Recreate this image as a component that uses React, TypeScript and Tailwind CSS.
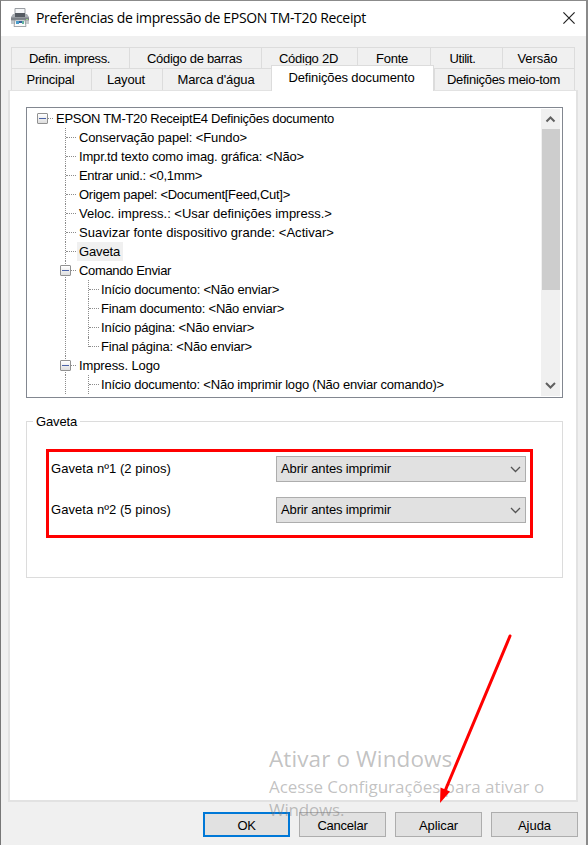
import type { ReactNode } from 'react';

type Tab = { label: string; cls: string; active?: boolean };

const topTabs: Tab[] = [
  { label: 'Defin. impress.', cls: 'w-[118px] tracking-[-0.38px]' },
  { label: 'Código de barras', cls: 'w-[132px] tracking-[-0.3px]' },
  { label: 'Código 2D', cls: 'w-[96px] tracking-[-0.27px]' },
  { label: 'Fonte', cls: 'w-[73px] pr-[4px] tracking-[-0.25px]' },
  { label: 'Utilit.', cls: 'w-[72px] pr-[8px] tracking-[-0.41px]' },
  { label: 'Versão', cls: 'w-[73px] tracking-[-0.08px]' },
];

const bottomTabs: Tab[] = [
  { label: 'Principal', cls: 'w-[80px] tracking-[-0.2px]' },
  { label: 'Layout', cls: 'w-[71px] tracking-[-0.17px]' },
  { label: "Marca d'água", cls: 'w-[109px] tracking-[-0.11px]' },
  { label: 'Definições documento', cls: 'w-[163px] tracking-[-0.13px]', active: true },
  { label: 'Definições meio-tom', cls: 'w-[141px] tracking-[-0.29px]' },
];

type Node = { text: string; level: 0 | 1 | 2; cls: string; box?: boolean; selected?: boolean; last?: boolean };

const nodes: Node[] = [
  { text: 'EPSON TM-T20 ReceiptE4 Definições documento', level: 0, cls: 'tracking-[-0.285px]', box: true },
  { text: 'Conservação papel: <Fundo>', level: 1, cls: 'tracking-[-0.127px]' },
  { text: 'Impr.td texto como imag. gráfica: <Não>', level: 1, cls: 'tracking-[-0.16px]' },
  { text: 'Entrar unid.: <0,1mm>', level: 1, cls: 'tracking-[-0.3px]' },
  { text: 'Origem papel: <Document[Feed,Cut]>', level: 1, cls: 'tracking-[-0.276px]' },
  { text: 'Veloc. impress.: <Usar definições impress.>', level: 1, cls: 'tracking-[0px]' },
  { text: 'Suavizar fonte dispositivo grande: <Activar>', level: 1, cls: 'tracking-[0.03px]' },
  { text: 'Gaveta', level: 1, cls: 'tracking-[-0.15px]', selected: true },
  { text: 'Comando Enviar', level: 1, cls: 'tracking-[-0.345px]', box: true },
  { text: 'Início documento: <Não enviar>', level: 2, cls: 'tracking-[-0.209px]' },
  { text: 'Finam documento: <Não enviar>', level: 2, cls: 'tracking-[-0.218px]' },
  { text: 'Início página: <Não enviar>', level: 2, cls: 'tracking-[-0.222px]' },
  { text: 'Final página: <Não enviar>', level: 2, cls: 'tracking-[-0.197px]', last: true },
  { text: 'Impress. Logo', level: 1, cls: 'tracking-[-0.106px]', box: true },
  { text: 'Início documento: <Não imprimir logo (Não enviar comando)>', level: 2, cls: 'tracking-[-0.216px]' },
];

const drawers = [{ label: 'Gaveta nº1 (2 pinos)' }, { label: 'Gaveta nº2 (5 pinos)' }];

function PrinterIcon() {
  return (
    <svg width="20" height="20" viewBox="0 0 20 20" className="shrink-0">
      <path d="M5 .5h10V6H5z" fill="#f4f6f8" stroke="#9a9ea3" />
      <path d="M1 9l2-3h2v3h10V6h2l2 3v7H1z" fill="#a9aeb3" />
      <path d="M5 5h10v4H5z" fill="#555b62" />
      <path d="M1 9.500h18v3H1z" fill="#7c8288" />
      <path d="M1 12.500h18v3.500H1z" fill="#c4c8cb" />
      <path d="M5 12h10l1 6.500H4z" fill="#fafafa" stroke="#8b8f94" strokeWidth=".8" />
      <path d="M6 13h3v3H6z" fill="#4a9cc9" />
      <path d="M9 13h3v2H9z" fill="#3a5f9e" />
      <path d="M12 13h2v3h-2z" fill="#62b5a0" />
      <path d="M16 11h2v1h-2z" fill="#9fd48a" />
    </svg>
  );
}

function Chevron({ up, className }: { up?: boolean; className: string }) {
  return (
    <svg width="11" height="7" viewBox="0 0 11 7" fill="none" className={className}>
      <path d={up ? 'M1.500 5.500l4-4 4 4' : 'M1 1l4.500 4.500L10 1'} stroke="currentColor" />
    </svg>
  );
}

function TabRow({ tabs, top }: { tabs: Tab[]; top?: boolean }) {
  return (
    <div className={top ? 'flex h-[21px] pl-[10px]' : 'flex h-[22px] pl-[10px]'}>
      {tabs.map((t, i) =>
        t.active ? (
          <div
            key={t.label}
            className={`relative z-10 -mt-[3px] h-[26px] border-x border-t border-[#dcdcdc] bg-white pt-[4px] pr-[2px] text-center leading-[15px] ${t.cls}`}
          >
            {t.label}
          </div>
        ) : (
          <div
            key={t.label}
            className={`border-t border-l border-[#dcdcdc] pt-[3px] pr-[2px] text-center leading-[16px] ${i === tabs.length - 1 ? 'border-r' : ''} ${t.cls}`}
          >
            {t.label}
          </div>
        ),
      )}
    </div>
  );
}

function Toggle() {
  return (
    <span className="absolute top-[4px] left-[6px] flex size-[11px] items-center justify-center rounded-[1px] border border-[#919191] bg-linear-to-b from-white to-[#dedede]">
      <span className="h-px w-[7px] bg-[#4b63a7]" />
    </span>
  );
}

/* One indentation column: the vertical guide, and the branch that leads to the label. */
function Guide({ line, half, branch, box }: { line: boolean; half?: boolean; branch: boolean; box?: boolean }) {
  return (
    <span className="relative flex h-[19px] w-[23px] shrink-0 pl-[11px]">
      <span className={`w-px border-l border-dotted ${half ? 'h-[10px]' : 'h-full'} ${line ? 'border-[#8c8c8c]' : 'border-transparent'}`} />
      {branch && <span className="h-[10px] w-[10px] border-b border-dotted border-[#8c8c8c]" />}
      {box && <Toggle />}
    </span>
  );
}

function TreeRow({ node }: { node: Node }) {
  return (
    <div className="flex h-[19px] shrink-0 items-center">
      {node.level === 0 && <Guide line={false} branch box />}
      {node.level > 0 && <span className="w-[23px] shrink-0" />}
      {node.level > 0 && <Guide line branch={node.level === 1} box={node.level === 1 && node.box} />}
      {node.level === 2 && <Guide line half={node.last} branch />}
      <span
        className={`h-[19px] pr-[3px] leading-[19px] whitespace-nowrap ${node.level === 2 ? 'pl-px' : 'pl-[2px]'} ${node.selected ? 'bg-[#f0f0f0]' : ''} ${node.cls}`}
      >
        {node.text}
      </span>
    </div>
  );
}

function Button({ children, primary, cls }: { children: ReactNode; primary?: boolean; cls: string }) {
  return (
    <button
      className={`h-[25px] w-[87px] bg-[#e1e1e1] text-center leading-[21px] ${primary ? 'border-2 border-[#0078d7] pt-px' : 'border border-[#adadad] pt-px'} ${cls}`}
    >
      {children}
    </button>
  );
}

export default function App() {
  return (
    <div className="relative flex h-[845px] w-[588px] flex-col overflow-hidden border-t border-r-2 border-l border-t-[#8b8b8b] border-r-[#8a8a8a] border-l-[#777] bg-[#f0f0f0] font-['Liberation_Sans',Arial,sans-serif] text-[13px] text-black">
      <header className="flex h-[35px] items-center bg-white pr-[11px] pb-[2px] pl-[9px]">
        <PrinterIcon />
        <h1 className="ml-[6px] font-['Open_Sans','Noto_Sans',sans-serif] text-[14px] tracking-[-0.333px]">
          Preferências de impressão de EPSON TM-T20 Receipt
        </h1>
        <svg width="12" height="12" viewBox="0 0 12 12" className="ml-auto" stroke="#222" strokeWidth="1.200">
          <path d="M.4.400l11.200 11.200M11.600.400L.4 11.600" />
        </svg>
      </header>

      <main className="mx-[7px] mt-[11px] flex flex-col">
        <div className="-ml-[7px]">
          <TabRow tabs={topTabs} top />
          <TabRow tabs={bottomTabs} />
        </div>

        <section className="h-[712px] w-[570px] border-2 border-t border-[#e2e2e2] bg-white px-[16px] pt-[16px]">
          <div className="flex h-[291px] w-[537px] border border-[#828790] bg-white">
            <div className="flex min-w-0 flex-1 flex-col overflow-hidden pt-px pl-[4px]">
              {nodes.map((n, i) => (
                <TreeRow key={i} node={n} />
              ))}
            </div>
            <div className="my-px mr-[2px] flex w-[19px] flex-col items-center bg-[#f0f0f0]">
              <div className="flex h-[20px] items-center">
                <Chevron up className="text-[#606060] [stroke-width:2]" />
              </div>
              <div className="h-[161px] w-[18px] bg-[#cdcdcd]" />
              <div className="mt-auto flex h-[22px] items-center">
                <Chevron className="text-[#606060] [stroke-width:2]" />
              </div>
            </div>
          </div>

          <fieldset className="mt-[15px] h-[165px] w-[537px] border border-[#dcdcdc]">
            <legend className="ml-[6px] px-[3px] leading-[17px] tracking-[-0.15px]">Gaveta</legend>
            <div className="mt-[19px] ml-[19px] flex h-[89px] w-[487px] flex-col gap-[15px] border-[3px] border-[#ff0000] pt-[4px] pr-[4px] pl-[2px]">
              {drawers.map((d) => (
                <label key={d.label} className="flex h-[26px] items-center justify-between">
                  <span className="tracking-[0.05px]">{d.label}</span>
                  <span className="flex h-[26px] w-[250px] items-center justify-between border border-[#adadad] bg-[#e1e1e1] pr-[4px] pl-[4px]">
                    <span className="tracking-[-0.134px]">Abrir antes imprimir</span>
                    <Chevron className="text-[#555] [stroke-width:1.3]" />
                  </span>
                </label>
              ))}
            </div>
          </fieldset>
        </section>
      </main>

      <footer className="mt-[10px] flex gap-[9px] pl-[202px]">
        <Button primary cls="tracking-[-0.4px]">OK</Button>
        <Button cls="tracking-[-0.25px]">Cancelar</Button>
        <Button cls="tracking-[-0.11px]">Aplicar</Button>
        <Button cls="tracking-[-0.05px]">Ajuda</Button>
      </footer>

      <div className="pointer-events-none absolute top-[742px] left-[268px] font-['Open_Sans','Noto_Sans',sans-serif] whitespace-nowrap text-[#767676]/45">
        <p className="text-[22.5px] leading-[32px] tracking-[0.1px]">Ativar o Windows</p>
        <p className="text-[17px] leading-[23px] tracking-[-0.04px]">Acesse Configurações para ativar o</p>
        <p className="text-[17px] leading-[24px] tracking-[-0.2px]">Windows.</p>
      </div>

      <svg width="80" height="175" viewBox="0 0 80 175" className="pointer-events-none absolute top-[630px] left-[435px]">
        <path d="M74 5L9 160" stroke="#f00" strokeWidth="3" strokeLinecap="round" />
        <path d="M4 172l.5-15.500 9.500 4z" fill="#f00" />
      </svg>
    </div>
  );
}
